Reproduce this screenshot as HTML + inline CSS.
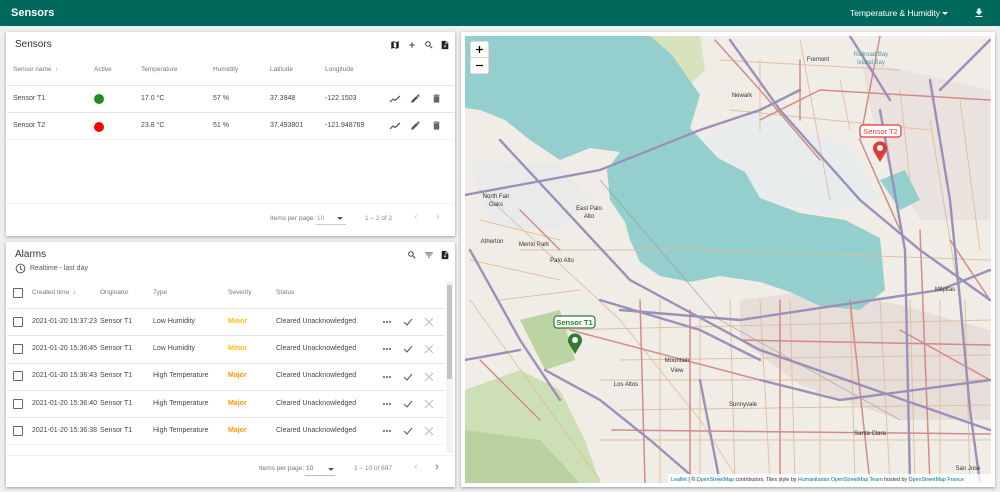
<!DOCTYPE html>
<html><head><meta charset="utf-8">
<style>
*{margin:0;padding:0;box-sizing:border-box}
body{width:1000px;height:492px;background:#eeeeee;font-family:"Liberation Sans",sans-serif;position:relative;overflow:hidden;color:#333}
.a{position:absolute;white-space:nowrap}
.hdr{left:0;top:0;width:1000px;height:26px;background:#00695c}
.card{background:#fff;box-shadow:0 1px 3px rgba(0,0,0,.35)}
.th{font-size:6.5px;color:#777}
.td{font-size:7px;color:#444}
.hl{height:1px;background:#e4e4e4}
.cb{width:10px;height:10px;border:1.5px solid #666;border-radius:1px}
.dot{width:10px;height:10px;border-radius:50%}
</style></head><body>
<div class="a hdr"></div>
<div class="a" style="left:11px;top:7px;font-size:11px;font-weight:bold;color:#fff">Sensors</div>
<div class="a" style="left:850px;top:8px;font-size:8.6px;color:#fff;letter-spacing:-0.1px">Temperature &amp; Humidity</div>
<svg class="a" style="left:942px;top:12px" width="6" height="3"><path d="M0 0L6 0L3 3Z" fill="#fff"/></svg>
<svg class="a" style="left:973px;top:7px" width="12" height="12" viewBox="0 0 24 24"><path d="M19 9h-4V3H9v6H5l7 7 7-7zM5 18v2h14v-2H5z" fill="#fff"/></svg>

<!-- Sensors card -->
<div class="a card" style="left:6px;top:32px;width:449px;height:204px"></div>
<div class="a" style="left:15px;top:39px;font-size:10px;color:#333">Sensors</div>
<svg class="a" style="left:390px;top:40px" width="10" height="10" viewBox="0 0 24 24"><path d="M20.5 3l-.16.03L15 5.1 9 3 3.36 4.9c-.21.07-.36.25-.36.48V20.5c0 .28.22.5.5.5l.16-.03L9 18.9l6 2.1 5.64-1.9c.21-.07.36-.25.36-.48V3.5c0-.28-.22-.5-.5-.5zM15 19l-6-2.11V5l6 2.11V19z" fill="#222"/></svg>
<svg class="a" style="left:407px;top:40px" width="10" height="10" viewBox="0 0 24 24"><path d="M19 13h-6v6h-2v-6H5v-2h6V5h2v6h6v2z" fill="#222"/></svg>
<svg class="a" style="left:424px;top:40px" width="10" height="10" viewBox="0 0 24 24"><path d="M15.5 14h-.79l-.28-.27A6.470 6.47 0 0016 9.5 6.5 6.5 0 109.5 16c1.61 0 3.09-.59 4.23-1.57l.27.28v.79l5 4.99L20.49 19l-4.99-5zm-6 0C7.01 14 5 11.99 5 9.5S7.01 5 9.5 5 14 7.01 14 9.5 11.99 14 9.5 14z" fill="#222"/></svg>
<svg class="a" style="left:440px;top:40px" width="10" height="10" viewBox="0 0 24 24"><path d="M14 2H6c-1.1 0-2 .9-2 2v16c0 1.1.9 2 2 2h12c1.1 0 2-.9 2-2V8l-6-6zm-1 7V3.5L18.5 9H13zm-1 9l-3-3h2v-4h2v4h2l-3 3z" fill="#222"/></svg>
<div class="a th" style="left:13px;top:66px">Sensor name &nbsp;↑</div>
<div class="a th" style="left:94px;top:66px">Active</div>
<div class="a th" style="left:141px;top:66px">Temperature</div>
<div class="a th" style="left:213px;top:66px">Humidity</div>
<div class="a th" style="left:270px;top:66px">Latitude</div>
<div class="a th" style="left:325px;top:66px">Longitude</div>
<div class="a hl" style="left:7px;top:85px;width:447px"></div>
<div class="a hl" style="left:7px;top:112px;width:447px"></div>
<div class="a hl" style="left:7px;top:139px;width:447px;background:#f0f0f0"></div>
<div class="a td" style="left:13px;top:95px">Sensor T1</div>
<div class="a dot" style="left:94px;top:94px;background:#228b22"></div>
<div class="a td" style="left:141px;top:95px">17.0 °C</div>
<div class="a td" style="left:213px;top:95px">57 %</div>
<div class="a td" style="left:270px;top:95px">37.3948</div>
<div class="a td" style="left:325px;top:95px">-122.1503</div>
<div class="a td" style="left:13px;top:122px">Sensor T2</div>
<div class="a dot" style="left:94px;top:122px;background:#ff0000"></div>
<div class="a td" style="left:141px;top:122px">23.8 °C</div>
<div class="a td" style="left:213px;top:122px">51 %</div>
<div class="a td" style="left:270px;top:122px">37.493801</div>
<div class="a td" style="left:325px;top:122px">-121.948769</div>
<svg class="a" style="left:389px;top:94px" width="12" height="10" viewBox="0 0 12 10"><path d="M1 8L4 5L6 6.5L11 2" stroke="#555" stroke-width="1.2" fill="none"/></svg>
<svg class="a" style="left:410px;top:93px" width="11" height="11" viewBox="0 0 24 24"><path d="M3 17.25V21h3.75L17.81 9.94l-3.75-3.75L3 17.25zM20.71 7.04a1 1 0 000-1.410l-2.34-2.34a1 1 0 00-1.41 0l-1.83 1.83 3.75 3.75 1.83-1.83z" fill="#555"/></svg>
<svg class="a" style="left:431px;top:93px" width="11" height="11" viewBox="0 0 24 24"><path d="M6 19c0 1.1.9 2 2 2h8c1.1 0 2-.9 2-2V7H6v12zM19 4h-3.5l-1-1h-5l-1 1H5v2h14V4z" fill="#666"/></svg>
<svg class="a" style="left:389px;top:121px" width="12" height="10" viewBox="0 0 12 10"><path d="M1 8L4 5L6 6.5L11 2" stroke="#555" stroke-width="1.2" fill="none"/></svg>
<svg class="a" style="left:410px;top:120px" width="11" height="11" viewBox="0 0 24 24"><path d="M3 17.25V21h3.75L17.81 9.94l-3.75-3.75L3 17.25zM20.71 7.04a1 1 0 000-1.41l-2.34-2.34a1 1 0 00-1.41 0l-1.83 1.83 3.75 3.75 1.83-1.83z" fill="#555"/></svg>
<svg class="a" style="left:431px;top:120px" width="11" height="11" viewBox="0 0 24 24"><path d="M6 19c0 1.1.9 2 2 2h8c1.1 0 2-.9 2-2V7H6v12zM19 4h-3.5l-1-1h-5l-1 1H5v2h14V4z" fill="#666"/></svg>
<div class="a hl" style="left:7px;top:203px;width:447px;background:#f2f2f2"></div>
<div class="a th" style="left:270px;top:215px">Items per page:</div>
<div class="a th" style="left:317px;top:215px;color:#999">10</div>
<div class="a hl" style="left:316px;top:224px;width:30px;background:#ccc"></div>
<svg class="a" style="left:337px;top:217px" width="6" height="3"><path d="M0 0L6 0L3 3Z" fill="#555"/></svg>
<div class="a th" style="left:365px;top:215px;color:#888">1 – 2 of 2</div>
<div class="a" style="left:414px;top:211px;font-size:11px;color:#ccc">‹</div>
<div class="a" style="left:436px;top:211px;font-size:11px;color:#ccc">›</div>

<!-- Alarms card -->
<div class="a card" style="left:6px;top:242px;width:449px;height:245px"></div>
<div class="a" style="left:15px;top:249px;font-size:10px;color:#333">Alarms</div>
<svg class="a" style="left:407px;top:250px" width="10" height="10" viewBox="0 0 24 24"><path d="M15.5 14h-.79l-.28-.27A6.47 6.47 0 0016 9.5 6.5 6.5 0 109.5 16c1.61 0 3.09-.59 4.23-1.57l.27.28v.79l5 4.99L20.49 19l-4.99-5zm-6 0C7.01 14 5 11.99 5 9.5S7.01 5 9.5 5 14 7.01 14 9.5 11.99 14 9.5 14z" fill="#222"/></svg>
<svg class="a" style="left:424px;top:250px" width="10" height="10" viewBox="0 0 24 24"><path d="M10 18h4v-2h-4v2zM3 6v2h18V6H3zm3 7h12v-2H6v2z" fill="#222"/></svg>
<svg class="a" style="left:440px;top:250px" width="10" height="10" viewBox="0 0 24 24"><path d="M14 2H6c-1.1 0-2 .9-2 2v16c0 1.1.9 2 2 2h12c1.1 0 2-.9 2-2V8l-6-6zm-1 7V3.5L18.5 9H13zm-1 9l-3-3h2v-4h2v4h2l-3 3z" fill="#222"/></svg>
<svg class="a" style="left:15px;top:263px" width="11" height="11" viewBox="0 0 12 12"><circle cx="6" cy="6" r="4.8" stroke="#444" stroke-width="1" fill="none"/><path d="M6 3V6.3L8 7.5" stroke="#444" stroke-width="1" fill="none"/></svg>
<div class="a" style="left:30px;top:265px;font-size:7px;color:#555">Realtime - last day</div>
<div class="a cb" style="left:13px;top:288px"></div>
<div class="a th" style="left:32px;top:289px">Created time &nbsp;↓</div>
<div class="a th" style="left:100px;top:289px">Originator</div>
<div class="a th" style="left:153px;top:289px">Type</div>
<div class="a th" style="left:228px;top:289px">Severity</div>
<div class="a th" style="left:276px;top:289px">Status</div>
<div class="a hl" style="left:7px;top:308px;width:438px"></div>
<div class="a hl" style="left:7px;top:335px;width:438px"></div>
<div class="a hl" style="left:7px;top:363px;width:438px"></div>
<div class="a hl" style="left:7px;top:390px;width:438px"></div>
<div class="a hl" style="left:7px;top:417px;width:438px"></div>
<div class="a hl" style="left:7px;top:444px;width:438px;background:#f2f2f2"></div>

<div class="a cb" style="left:13px;top:317px"></div>
<div class="a td" style="left:32px;top:318px">2021-01-20 15:37:23</div><div class="a td" style="left:100px;top:318px">Sensor T1</div><div class="a td" style="left:153px;top:318px">Low Humidity</div><div class="a td" style="left:228px;top:318px;color:#ffc107;font-weight:bold">Minor</div><div class="a td" style="left:276px;top:318px">Cleared Unacknowledged</div>
<div class="a cb" style="left:13px;top:344px"></div>
<div class="a td" style="left:32px;top:345px">2021-01-20 15:36:45</div><div class="a td" style="left:100px;top:345px">Sensor T1</div><div class="a td" style="left:153px;top:345px">Low Humidity</div><div class="a td" style="left:228px;top:345px;color:#ffc107;font-weight:bold">Minor</div><div class="a td" style="left:276px;top:345px">Cleared Unacknowledged</div>
<div class="a cb" style="left:13px;top:371px"></div>
<div class="a td" style="left:32px;top:372px">2021-01-20 15:36:43</div><div class="a td" style="left:100px;top:372px">Sensor T1</div><div class="a td" style="left:153px;top:372px">High Temperature</div><div class="a td" style="left:228px;top:372px;color:#ff9800;font-weight:bold">Major</div><div class="a td" style="left:276px;top:372px">Cleared Unacknowledged</div>
<div class="a cb" style="left:13px;top:399px"></div>
<div class="a td" style="left:32px;top:400px">2021-01-20 15:36:40</div><div class="a td" style="left:100px;top:400px">Sensor T1</div><div class="a td" style="left:153px;top:400px">High Temperature</div><div class="a td" style="left:228px;top:400px;color:#ff9800;font-weight:bold">Major</div><div class="a td" style="left:276px;top:400px">Cleared Unacknowledged</div>
<div class="a cb" style="left:13px;top:426px"></div>
<div class="a td" style="left:32px;top:427px">2021-01-20 15:36:38</div><div class="a td" style="left:100px;top:427px">Sensor T1</div><div class="a td" style="left:153px;top:427px">High Temperature</div><div class="a td" style="left:228px;top:427px;color:#ff9800;font-weight:bold">Major</div><div class="a td" style="left:276px;top:427px">Cleared Unacknowledged</div>

<svg class="a" style="left:380px;top:310px" width="60" height="130">
<g fill="#555"><circle cx="4" cy="12" r="1"/><circle cx="7" cy="12" r="1"/><circle cx="10" cy="12" r="1"/>
<circle cx="4" cy="39" r="1"/><circle cx="7" cy="39" r="1"/><circle cx="10" cy="39" r="1"/>
<circle cx="4" cy="67" r="1"/><circle cx="7" cy="67" r="1"/><circle cx="10" cy="67" r="1"/>
<circle cx="4" cy="94" r="1"/><circle cx="7" cy="94" r="1"/><circle cx="10" cy="94" r="1"/>
<circle cx="4" cy="121" r="1"/><circle cx="7" cy="121" r="1"/><circle cx="10" cy="121" r="1"/></g>
<g stroke="#555" stroke-width="1" fill="none"><path d="M24 12L27 15L32 9"/><path d="M24 39L27 42L32 36"/><path d="M24 67L27 70L32 64"/><path d="M24 94L27 97L32 91"/><path d="M24 121L27 124L32 118"/></g>
<g stroke="#bbb" stroke-width="1"><path d="M45 8L53 16M53 8L45 16"/><path d="M45 35L53 43M53 35L45 43"/><path d="M45 63L53 71M53 63L45 71"/><path d="M45 90L53 98M53 90L45 98"/><path d="M45 117L53 125M53 117L45 125"/></g>
</svg>
<div class="a" style="left:446px;top:281px;width:7px;height:172px;background:#f3f3f3"></div>
<div class="a" style="left:447px;top:285px;width:5px;height:94px;background:#c4c4c4"></div>
<div class="a hl" style="left:7px;top:455px;width:447px;background:#f2f2f2"></div>
<div class="a th" style="left:259px;top:465px">Items per page:</div>
<div class="a th" style="left:306px;top:465px;color:#666">10</div>
<div class="a hl" style="left:305px;top:475px;width:30px;background:#bbb"></div>
<svg class="a" style="left:328px;top:468px" width="6" height="3"><path d="M0 0L6 0L3 3Z" fill="#555"/></svg>
<div class="a th" style="left:354px;top:465px;color:#888">1 – 10 of 697</div>
<div class="a" style="left:414px;top:461px;font-size:11px;color:#ccc">‹</div>
<div class="a" style="left:435px;top:461px;font-size:11px;color:#666">›</div>

<!-- Map card -->
<div class="a card" style="left:461px;top:32px;width:534px;height:455px"></div>
<svg class="a" style="left:465px;top:36px" width="526" height="447" viewBox="465 36 526 447">
<rect x="465" y="36" width="526" height="447" fill="#f0ede6"/>
<path d="M465 390 L520 370 L560 390 L585 440 L600 483 L465 483Z" fill="#cddfb5"/>
<path d="M465 430 L540 440 L580 483 L465 483Z" fill="#b8d19e"/>
<path d="M520 320 L560 310 L575 360 L545 370Z" fill="#bcd5a3"/>
<path d="M647 36 L700 36 L705 70 L690 85 L660 70Z" fill="#d6e3bd"/>
<path d="M740 300 L820 290 L900 305 L990 330 L990 420 L900 420 L800 385 L740 340Z" fill="#dccaca" opacity=".45"/>
<path d="M860 60 L990 90 L990 220 L920 220 L880 150Z" fill="#e2d4d4" opacity=".45"/>
<path d="M700 140 L760 110 L850 150 L880 200 L830 215 L760 200 L720 170Z" fill="#e8ecec"/>
<path d="M470 160 L560 165 L590 200 L560 230 L490 225Z" fill="#e8ebea"/>
<path d="M465 36 L650 36 L672 55 L700 95 L690 128 L718 158 L745 172 L760 198 L800 213 L845 220 L880 238 L885 290 L860 310 L820 306 L790 292 L760 282 L720 276 L690 282 L660 276 L640 262 L630 240 L625 222 L610 200 L607 170 L620 152 L590 148 L560 160 L530 140 L505 120 L480 110 L465 108Z" fill="#94cfcd"/>
<path d="M880 180 L905 170 L920 200 L900 210Z" fill="#94cfcd"/>
<g fill="none" stroke-linecap="round">
<g stroke="#e3bc9c" stroke-width="1" opacity=".9">
<path d="M480 190 L620 320 L700 420 L740 483"/><path d="M520 250 L700 250 L990 260"/><path d="M600 380 L990 380"/><path d="M700 320 L700 483"/><path d="M760 300 L770 483"/><path d="M820 300 L820 483"/><path d="M880 300 L890 483"/><path d="M560 330 L990 320"/><path d="M600 440 L990 440"/><path d="M720 60 L900 70"/><path d="M730 110 L930 130"/><path d="M800 40 L830 200"/><path d="M930 120 L960 300"/><path d="M470 300 L600 480"/><path d="M660 300 L660 483"/><path d="M940 300 L940 483"/>
<path d="M620 360 L990 355"/><path d="M620 410 L990 405"/><path d="M730 300 L735 483"/><path d="M790 300 L795 483"/><path d="M850 300 L855 483"/><path d="M910 300 L915 483"/><path d="M965 300 L970 483"/><path d="M470 260 L560 280"/><path d="M480 220 L560 240"/><path d="M500 300 L580 290"/><path d="M760 60 L760 130"/><path d="M840 80 L850 130"/><path d="M900 90 L910 180"/><path d="M960 100 L980 250"/>
</g>
<g stroke="#d48a8a" stroke-width="1.5">
<path d="M715 40 L760 90 L820 160"/><path d="M880 36 L860 140 L900 230"/><path d="M760 120 L820 90 L990 100"/><path d="M690 310 L690 483"/><path d="M612 430 L990 434"/><path d="M570 330 L760 380"/><path d="M850 300 L870 483"/><path d="M950 240 L990 300"/><path d="M480 360 L540 420"/><path d="M900 330 L990 380"/><path d="M520 210 L560 250"/><path d="M640 300 L645 483"/><path d="M780 300 L780 483"/><path d="M740 340 L990 345"/><path d="M920 230 L930 483"/><path d="M800 60 L800 120"/>
</g>
<g stroke="#9a91b8" stroke-width="2.4">
<path d="M465 195 L600 170 L700 130 L760 110 L800 90"/><path d="M500 140 L630 280 L760 350 L990 430"/><path d="M730 40 L780 110 L860 200 L920 250 L990 300"/><path d="M600 300 L700 330 L760 360"/><path d="M620 310 L740 320 L940 290 L990 270"/><path d="M930 80 L950 200 L960 300 L970 410 L980 483"/><path d="M880 110 L905 250 L910 483"/><path d="M545 370 L600 400 L650 440 L700 483"/><path d="M465 360 L520 350"/><path d="M760 380 L840 400 L990 380"/><path d="M990 40 L960 70 L940 90"/><path d="M850 36 L890 100"/><path d="M700 380 L720 483"/><path d="M470 250 L520 340 L560 400"/>
</g>
<path d="M600 180 L720 320 L900 420" stroke="#999" stroke-width=".6"/>
</g>
<g font-family="Liberation Sans,sans-serif" font-size="6" fill="#333" text-anchor="middle">
<text x="818" y="61">Fremont</text><text x="742" y="97">Newark</text>
<text x="871" y="56" fill="#4a9aa0">Railroad Bay</text><text x="871" y="64" fill="#4a9aa0">Island Bay</text>
<text x="496" y="198">North Fair</text><text x="496" y="206">Oaks</text>
<text x="589" y="210">East Palo</text><text x="589" y="218">Alto</text>
<text x="492" y="243">Atherton</text><text x="534" y="246">Menlo Park</text><text x="562" y="262">Palo Alto</text>
<text x="677" y="362">Mountain</text><text x="677" y="372">View</text><text x="626" y="386">Los Altos</text>
<text x="743" y="406">Sunnyvale</text><text x="870" y="435">Santa Clara</text><text x="945" y="291">Milpitas</text>
<text x="968" y="470">San Jose</text>
</g>
<g>
<rect x="860" y="125" width="41" height="12" rx="3" fill="#fff" stroke="#e53935" stroke-width="1.2"/>
<text x="880.5" y="134" font-family="Liberation Sans,sans-serif" font-size="7.5" fill="#e53935" text-anchor="middle">Sensor T2</text>
<path d="M880 162 L874 152 A7 7 0 1 1 886 152Z" fill="#e53935"/><circle cx="880" cy="148" r="3" fill="#fff"/>
<rect x="554" y="316" width="41" height="12" rx="3" fill="#fff" stroke="#2e7d32" stroke-width="1.2"/>
<text x="574.5" y="325" font-family="Liberation Sans,sans-serif" font-size="7.5" fill="#2e7d32" font-weight="bold" text-anchor="middle">Sensor T1</text>
<path d="M575 354 L569 344 A7 7 0 1 1 581 344Z" fill="#2e7d32"/><circle cx="575" cy="340" r="3" fill="#fff"/>
</g>
<rect x="470" y="41" width="19" height="33" rx="2" fill="#fff" stroke="#bbb"/>
<line x1="470" y1="57.5" x2="489" y2="57.5" stroke="#ccc"/>
<path d="M476 49.5H483M479.5 46V53M476 65.5H483" stroke="#000" stroke-width="1.3"/>
<rect x="668" y="474" width="323" height="9" fill="#fff" opacity=".8"/>
<text x="671" y="481" font-family="Liberation Sans,sans-serif" font-size="5.3" fill="#333"><tspan fill="#0078a8">Leaflet</tspan> | © <tspan fill="#0078a8">OpenStreetMap</tspan> contributors, Tiles style by <tspan fill="#0078a8">Humanitarian OpenStreetMap Team</tspan> hosted by <tspan fill="#0078a8">OpenStreetMap France</tspan></text>
</svg>
</body></html>
